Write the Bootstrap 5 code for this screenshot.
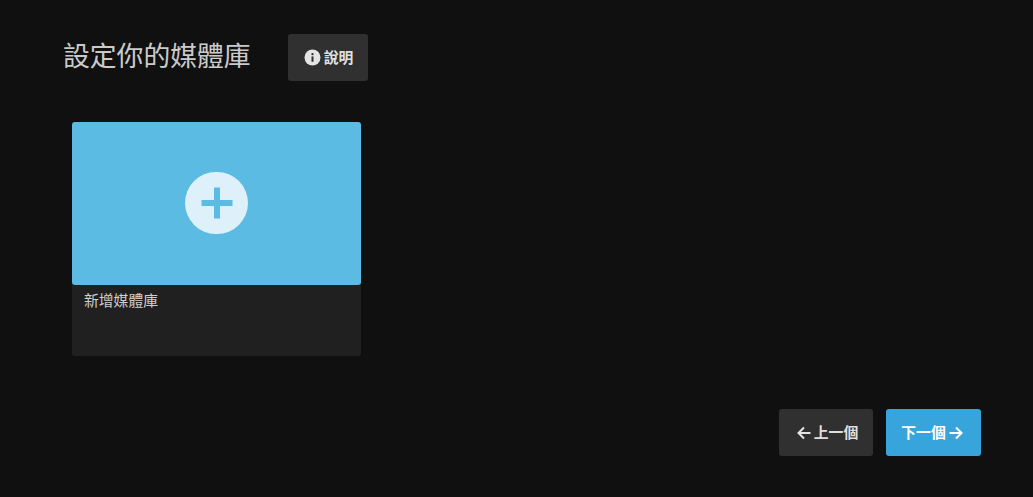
<!DOCTYPE html>
<html lang="zh-Hant">
<head>
<meta charset="utf-8">
<title>設定你的媒體庫</title>
<link href="https://cdn.jsdelivr.net/npm/bootstrap@5.3.0/dist/css/bootstrap.min.css" rel="stylesheet">
<style>
html,body{height:100%}
body{background:#101010;color:rgba(255,255,255,.8);font-family:Roboto,"Noto Sans CJK TC","Noto Sans CJK SC",sans-serif;overflow:hidden}
.wizard{height:497px;padding:34px 52px 41px 63px}
.wiz-title{font-size:26.8px;font-weight:400;line-height:46px;margin:0 0 1px;color:rgba(255,255,255,.8)}
.wiz-head{gap:37px}
.wiz-btn{display:inline-flex;align-items:center;justify-content:center;height:47px;border:0;border-radius:3px;font-size:14.8px;font-weight:700;padding:0;color:rgba(255,255,255,.87);background:#303030}
.wiz-btn:hover,.wiz-btn:active{background:#303030!important;color:rgba(255,255,255,.87)!important}
.help-btn{width:80px;gap:3px;padding-left:2px}
.prev-btn{width:94px;gap:2px;padding-left:2px}
.next-btn{width:95px;gap:2px;padding-right:2px;background:#38a4dc;color:#fff}
.next-btn:hover,.next-btn:active{background:#38a4dc!important;color:#fff!important}
.wiz-btn span{position:relative;top:.5px}
.lib-tile{width:289px;height:234px;margin:41px 0 0 9px;background:#202020;border:0;border-radius:3px;color:rgba(255,255,255,.8)}
.lib-cover{height:163px;background:#5bbbe3;border-radius:3px;padding-bottom:1px}
.plus-disc{width:62.5px;height:62.5px;border-radius:50%;background:#def1fa}
.lib-name{font-size:14.8px;line-height:22px;padding:5px 12px 0}
.wiz-foot{gap:13px;margin-top:auto}
</style>
</head>
<body>
<main class="wizard d-flex flex-column">
  <div class="wiz-head d-flex align-items-start">
    <h1 class="wiz-title">設定你的媒體庫</h1>
    <button type="button" class="btn wiz-btn help-btn">
      <svg width="17" height="17" viewBox="0 0 17 17" aria-hidden="true"><circle cx="8.5" cy="8.5" r="8" fill="#e4e4e4"/><rect x="7.5" y="7.4" width="2" height="5.4" fill="#303030"/><circle cx="8.5" cy="5.1" r="1.2" fill="#303030"/></svg>
      <span>說明</span>
    </button>
  </div>
  <div class="card lib-tile">
    <div class="lib-cover d-flex align-items-center justify-content-center">
      <div class="plus-disc d-flex align-items-center justify-content-center">
        <svg width="32" height="32" viewBox="0 0 32 32" aria-hidden="true"><path d="M13 .5h6V13h12.5v6H19v12.5h-6V19H.5v-6H13z" fill="#5bbbe3"/></svg>
      </div>
    </div>
    <div class="lib-name">新增媒體庫</div>
  </div>
  <div class="wiz-foot d-flex justify-content-end">
    <button type="button" class="btn wiz-btn prev-btn">
      <svg width="16" height="16" viewBox="0 0 16 16" aria-hidden="true"><path d="M14.5 8H2.5M8 2.5 2.5 8 8 13.5" fill="none" stroke="currentColor" stroke-width="2"/></svg>
      <span>上一個</span>
    </button>
    <button type="button" class="btn wiz-btn next-btn">
      <span>下一個</span>
      <svg width="16" height="16" viewBox="0 0 16 16" aria-hidden="true"><path d="M1.5 8h12M8 2.5 13.5 8 8 13.5" fill="none" stroke="currentColor" stroke-width="2"/></svg>
    </button>
  </div>
</main>
<script src="https://cdn.jsdelivr.net/npm/bootstrap@5.3.0/dist/js/bootstrap.bundle.min.js"></script>
</body>
</html>
